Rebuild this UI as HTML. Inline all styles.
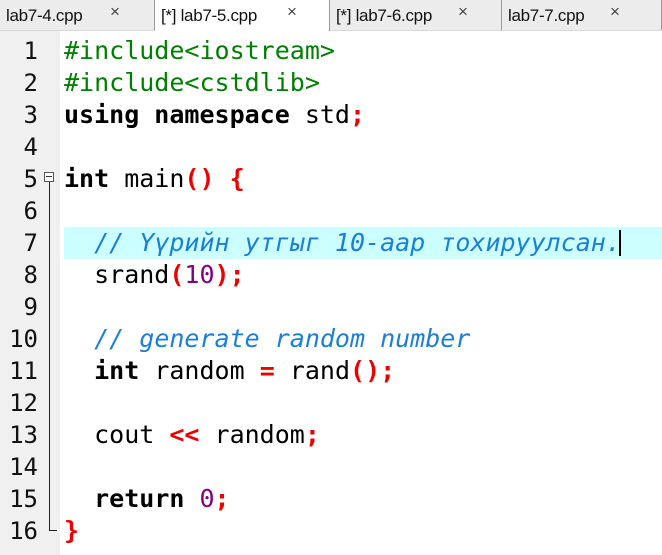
<!DOCTYPE html>
<html><head><style>
body{margin:0;width:662px;height:555px;background:#fff;overflow:hidden;position:relative;font-family:"DejaVu Sans Mono",monospace}
.tabs{position:absolute;left:0;top:0;width:662px;height:30px;background:#ececec;border-bottom:1px solid #d8d8d8}
.tab{position:absolute;top:0;height:30px;font:17px "Liberation Sans",sans-serif;line-height:31px;color:#111;border-right:1px solid #9a9a9a;box-sizing:border-box;padding-left:6px;letter-spacing:-0.3px}
.tab .x{position:absolute;top:-4px;font-size:17px;color:#444}
.gut{position:absolute;left:0;top:31px;width:60px;height:524px;background:#f0f0f0}
.ln{position:absolute;left:0;width:38px;text-align:right;font-size:24px;color:#111;line-height:32px}
.code{position:absolute;left:64px;font-size:25px;line-height:32px;white-space:pre;color:#000}
.g{color:#008000}.b{font-weight:bold}.r{color:#e00;font-weight:bold}.c{color:#1a7fd8;font-style:italic}.p{color:#800080}
</style></head><body>
<div class="tabs">
<div class="tab" style="left:0;width:155px">lab7-4.cpp<span class="x" style="left:110px">×</span></div>
<div class="tab" style="left:155px;width:175px;background:#fff;height:31px">[*] lab7-5.cpp<span class="x" style="left:132px">×</span></div>
<div class="tab" style="left:330px;width:172px">[*] lab7-6.cpp<span class="x" style="left:128px">×</span></div>
<div class="tab" style="left:502px;width:160px">lab7-7.cpp<span class="x" style="left:108px">×</span></div>
</div>
<div class="gut"></div>
<div style="position:absolute;left:64px;top:227px;width:598px;height:32px;background:#ccffff"></div>
<div style="position:absolute;left:44px;top:172px;width:10px;height:10px;border:1px solid #555;background:#fff;box-sizing:border-box"></div>
<div style="position:absolute;left:46px;top:176px;width:6px;height:1px;background:#333"></div>
<div style="position:absolute;left:49px;top:182px;width:1px;height:349px;background:#222"></div>
<div style="position:absolute;left:49px;top:530px;width:8px;height:1px;background:#222"></div>
<div style="position:absolute;left:619px;top:230px;width:2px;height:26px;background:#000"></div>
<div class="ln" style="top:35px">1</div><div class="ln" style="top:67px">2</div><div class="ln" style="top:99px">3</div><div class="ln" style="top:131px">4</div><div class="ln" style="top:163px">5</div><div class="ln" style="top:195px">6</div><div class="ln" style="top:227px">7</div><div class="ln" style="top:259px">8</div><div class="ln" style="top:291px">9</div><div class="ln" style="top:323px">10</div><div class="ln" style="top:355px">11</div><div class="ln" style="top:387px">12</div><div class="ln" style="top:419px">13</div><div class="ln" style="top:451px">14</div><div class="ln" style="top:483px">15</div><div class="ln" style="top:515px">16</div>
<div class="code" style="top:35px"><span class="g">#include&lt;iostream&gt;</span>
<span class="g">#include&lt;cstdlib&gt;</span>
<span class="b">using namespace</span> std<span class="r">;</span>

<span class="b">int</span> main<span class="r">()</span> <span class="r">{</span>

  <span class="c">// Үүрийн утгыг 10-аар тохируулсан.</span>
  srand<span class="r">(</span><span class="p">10</span><span class="r">);</span>

  <span class="c">// generate random number</span>
  <span class="b">int</span> random <span class="r">=</span> rand<span class="r">();</span>

  cout <span class="r">&lt;&lt;</span> random<span class="r">;</span>

  <span class="b">return</span> <span class="p">0</span><span class="r">;</span>
<span class="r">}</span></div>
</body></html>
